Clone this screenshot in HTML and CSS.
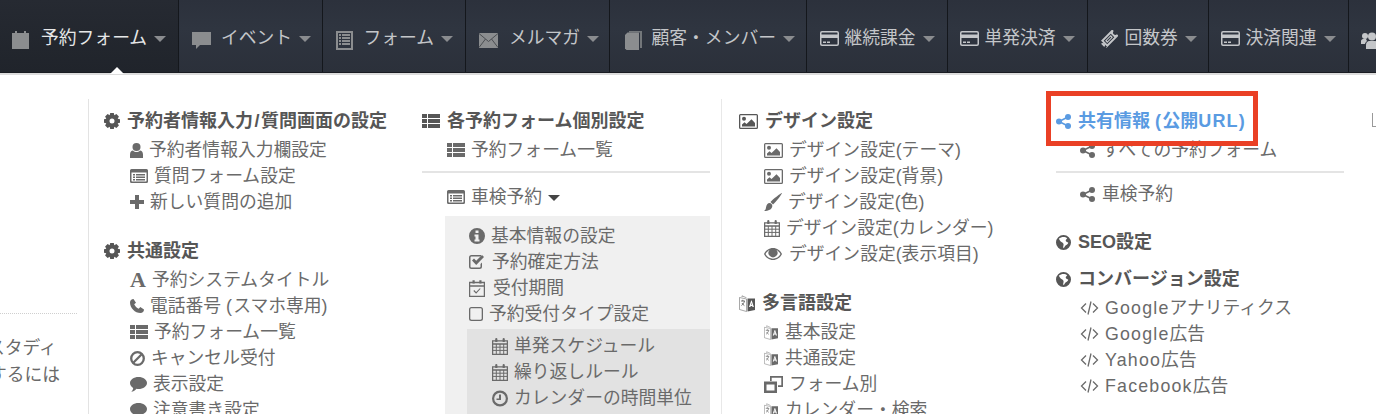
FILE: index.html
```html
<!DOCTYPE html>
<html lang="ja">
<head>
<meta charset="utf-8">
<title>予約フォーム</title>
<link rel="stylesheet" href="styles.css">
</head>
<body>
<svg class="defs" aria-hidden="true">
  <symbol id="nav-cal" viewBox="0 0 17 18"><path d="M3 0h2v2h7V0h2v2h3v16H0V2h3z"/><path class="cut" d="M1.500 6.500h14v10h-14z"/><path d="M2 7h2v2H2zm3 0h2v2H5zm3 0h2v2H8zm3 0h2v2h-2zm3 0h1.500v2H14zM2 10h2v2H2zm3 0h2v2H5zm3 0h2v2H8zm3 0h2v2h-2zm3 0h1.500v2H14zM2 13h2v2H2zm3 0h2v2H5zm3 0h2v2H8zm3 0h2v2h-2zm3 0h1.500v2H14z"/></symbol>
  <symbol id="nav-comment" viewBox="0 0 19 17"><path d="M0 0h19v13H8l-4 4v-4H0z"/></symbol>
  <symbol id="nav-form" viewBox="0 0 17 19"><path fill-rule="evenodd" d="M0 0h17v19H0zM2 2v15h13V2z"/><path d="M3 3h2v2H3zm3 0h8v2H6zM3 6h2v2H3zm3 0h8v2H6zM3 9h2v2H3zm3 0h8v2H6zM3 12h2v2H3zm3 0h8v2H6z"/></symbol>
  <symbol id="nav-mail" viewBox="0 0 19 15"><path d="M0 0h19v15H0z"/><path d="M0 .5l9.500 8 9.500-8M0 14.500l6.500-8.500M19 14.500L12.500 6" fill="none" stroke="#4b4e52" stroke-width="1"/></symbol>
  <symbol id="nav-book" viewBox="0 0 17 19"><path d="M4 0h13v17h-2V1.500H4z" opacity=".75"/><path d="M0 4l2.500-2.500H14V19H1.500L0 17.500z"/></symbol>
  <symbol id="card" viewBox="0 0 19 15"><path fill-rule="evenodd" d="M2 0h15a2 2 0 0 1 2 2v11a2 2 0 0 1-2 2H2a2 2 0 0 1-2-2V2a2 2 0 0 1 2-2zm-.500 7v6c0 .3.200.5.500.5h15c.3 0 .5-.2.500-.5V7zm0-3.500h16V2c0-.3-.2-.5-.5-.5H2c-.3 0-.5.200-.5.500z"/><path d="M3 10.500h3V12H3zm4 0h3V12H7z"/></symbol>
  <symbol id="ticket" viewBox="0 0 18 18"><g transform="rotate(-45 9 9)"><path fill-rule="evenodd" d="M0 4.500h2.200a1.300 1.300 0 0 0 0 .5v8h-2.200zM0 4.500h18v2.200a2.300 2.300 0 0 0 0 4.600v2.200H0v-2.200a2.300 2.300 0 0 0 0-4.600zM4 6.500v5h10v-5z"/><path fill-rule="evenodd" d="M5 7.500h8v3H5zM6.300 8.500v1h5.400v-1z"/></g></symbol>
  <symbol id="users" viewBox="0 0 22 17"><circle cx="11" cy="4.500" r="4"/><circle cx="4" cy="4" r="3"/><circle cx="18" cy="4" r="3"/><path d="M5 17v-4c0-3 2-4 3-4h6c1 0 3 1 3 4v4zM0 12V9c0-1 1-2 2-2h3l1 2c-1 1-2 2-2 3zM22 12V9c0-1-1-2-2-2h-3l-1 2c1 1 2 2 2 3z"/></symbol>
  <symbol id="cog" viewBox="0 0 16 16"><path fill-rule="evenodd" d="M6.200 0h3.600l.5 2.300 2.100-1.200 2.500 2.500-1.200 2.100 2.300.5v3.600l-2.300.5 1.200 2.100-2.500 2.500-2.100-1.200-.5 2.300H6.200l-.5-2.300-2.100 1.200-2.500-2.500 1.200-2.100L0 9.800V6.200l2.300-.5-1.200-2.100 2.500-2.500 2.100 1.200zM8 5.500a2.500 2.500 0 1 0 0 5 2.500 2.500 0 0 0 0-5z"/></symbol>
  <symbol id="th" viewBox="0 0 18 14"><path d="M0 0h5v4H0zm6 0h12v4H6zM0 5h5v4H0zm6 0h12v4H6zM0 10h5v4H0zm6 0h12v4H6z"/></symbol>
  <symbol id="user" viewBox="0 0 13 15"><circle cx="6.500" cy="4" r="4"/><path d="M0 15v-3.500C0 9 1.500 7.500 3 7.500c1 1 2.200 1.500 3.500 1.500S9 8.500 10 7.500c1.500 0 3 1.500 3 4V15z"/></symbol>
  <symbol id="listalt" viewBox="0 0 18 14"><path fill-rule="evenodd" d="M1.500 0h15A1.500 1.500 0 0 1 18 1.500v11a1.500 1.500 0 0 1-1.500 1.500h-15A1.500 1.500 0 0 1 0 12.500v-11A1.500 1.500 0 0 1 1.500 0zm0 3.500v8.500c0 .3.200.5.500.5h14c.3 0 .5-.2.500-.5V3.500z"/><path d="M3 5h2v1.500H3zm3 0h9v1.500H6zM3 7.500h2V9H3zm3 0h9V9H6zM3 10h2v1.500H3zm3 0h9v1.500H6z"/></symbol>
  <symbol id="plus" viewBox="0 0 14 14"><path d="M5 0h4v5h5v4H9v5H5V9H0V5h5z"/></symbol>
  <symbol id="phone" viewBox="0 0 14 14"><path d="M3.500 0L6 3.700 4.200 5.300c.8 1.800 2.600 3.700 4.500 4.500L10.300 8 14 10.500c0 2-1.500 3.500-3.500 3.500C5 14 0 9 0 3.500 0 1.500 1.500 0 3.500 0z"/></symbol>
  <symbol id="ban" viewBox="0 0 15 15"><circle cx="7.500" cy="7.500" r="6.300" fill="none" stroke="currentColor" stroke-width="2.300"/><path d="M3.300 11.700L11.700 3.300" stroke="currentColor" stroke-width="2.300"/></symbol>
  <symbol id="comment" viewBox="0 0 17 15"><path d="M8.500 0C13.200 0 17 2.700 17 6s-3.800 6-8.500 6c-.8 0-1.400 0-2-.2C5 13.500 3 14.800 1.200 15c1-1 1.800-2.200 2-4C1.300 9.900 0 8.100 0 6c0-3.300 3.800-6 8.500-6z"/></symbol>
  <symbol id="info" viewBox="0 0 16 16"><path fill-rule="evenodd" d="M8 0a8 8 0 1 1 0 16A8 8 0 0 1 8 0zM6.500 2.500v2.500h3V2.500zM5.500 6.500v2h1v3h-1v2h5v-2h-1v-5z"/></symbol>
  <symbol id="check" viewBox="0 0 15 14"><path fill-rule="evenodd" d="M2.500 0H12v1.500H2.500c-.6 0-1 .4-1 1v9c0 .6.400 1 1 1h8c.6 0 1-.4 1-1V9L13 7.500v4A2.500 2.500 0 0 1 10.500 14h-8A2.500 2.500 0 0 1 0 11.500v-9A2.500 2.500 0 0 1 2.500 0z"/><path d="M3 5.500l2-2 2.200 2.300L13 0l2 2-7.800 8z"/></symbol>
  <symbol id="calcheck" viewBox="0 0 16 17"><path d="M3.500 .3h2.200v3.200H3.500zM10.300 .3h2.200v3.200h-2.200z"/><path d="M.6 2.500h14.800v13.900H.6zM.6 6h14.800" fill="none" stroke="currentColor" stroke-width="1.300"/><path d="M4.800 10.500l2.300 2.400 4.100-4.400" fill="none" stroke="currentColor" stroke-width="1.100"/></symbol>
  <symbol id="square" viewBox="0 0 14 14"><path fill-rule="evenodd" d="M2.500 0h9A2.500 2.500 0 0 1 14 2.500v9a2.500 2.500 0 0 1-2.500 2.500h-9A2.500 2.500 0 0 1 0 11.500v-9A2.500 2.500 0 0 1 2.500 0zm0 1.300c-.7 0-1.200.5-1.200 1.200v9c0 .7.500 1.200 1.200 1.200h9c.7 0 1.200-.5 1.200-1.200v-9c0-.7-.5-1.200-1.200-1.200z"/></symbol>
  <symbol id="calendar" viewBox="0 0 16 17"><path d="M3.200 2V1.200a1.100 1.100 0 0 1 2.200 0V4H3.200zM10.600 2V1.200a1.100 1.100 0 0 1 2.200 0V4h-2.200z"/><path d="M.6 2.800h14.800v13.600H.6zM.6 6h14.800" fill="none" stroke="currentColor" stroke-width="1.300"/><path d="M.6 9.200h14.800M.6 12.400h14.800M4.300 6v10.400M8 6v10.400M11.700 6v10.400" fill="none" stroke="currentColor" stroke-width="1"/></symbol>
  <symbol id="clock" viewBox="0 0 16 16"><path fill-rule="evenodd" d="M8 0a8 8 0 1 1 0 16A8 8 0 0 1 8 0zm0 2.200a5.800 5.800 0 1 0 0 11.600A5.800 5.800 0 0 0 8 2.200z"/><path d="M7 4h2v5.500H4.500V8H7z"/></symbol>
  <symbol id="picture" viewBox="0 0 19 15"><path fill-rule="evenodd" d="M1.500 0h16A1.500 1.500 0 0 1 19 1.500v12a1.500 1.500 0 0 1-1.500 1.500h-16A1.500 1.500 0 0 1 0 13.500v-12A1.500 1.500 0 0 1 1.500 0zm0 1.300c-.1 0-.2.100-.2.200v12c0 .1.100.2.200.2h16c.1 0 .2-.1.200-.2v-12c0-.1-.1-.2-.2-.2z"/><circle cx="5" cy="4.800" r="2"/><path d="M3 12.500V10.500l2.500-2.300L7.500 10l5-4.700 3.500 3.800v3.400z"/></symbol>
  <symbol id="brush" viewBox="0 0 18 18"><path d="M18 0c0 1-6 9-9 11.500L6.500 9C9 6 17 0 18 0z"/><path d="M5.500 10c1.500 0 3 1.300 2.800 3.300C8 16.500 4.500 18 0 18c1.500-1 1.800-2 2-3.500.3-2.500 1.800-4.500 3.500-4.500z"/></symbol>
  <symbol id="eye" viewBox="0 0 18 12"><path fill-rule="evenodd" d="M9 0c4 0 7.300 2.500 9 6-1.700 3.500-5 6-9 6s-7.300-2.500-9-6c1.700-3.500 5-6 9-6zM1.500 6C3 8.800 5.800 10.700 9 10.700s6-1.900 7.500-4.700C15.300 4 13.500 2.500 12.500 2a4.500 4.500 0 1 1-7 0C4.500 2.500 2.700 4 1.500 6z"/><circle cx="9" cy="5.800" r="3"/></symbol>
  <symbol id="lang" viewBox="0 0 16 17"><path d="M.5 2.500l7 1.500v12.500l-7-2zM3 2V.8l4.500 2" fill="none" stroke="currentColor" stroke-width=".8" opacity=".65"/><path d="M2 6h3.800M3.800 4.800v1.400M2.400 10.500c1.500-1 2.600-2.500 3.100-4.500M3 8c.5 1 1.300 1.900 2.400 2.600" fill="none" stroke="currentColor" stroke-width=".8"/><path fill-rule="evenodd" d="M8.500 3.500h7.500v11.500l-7.500 1.500zM12.200 5.500L10 12h1.400l.3-1.100h1.500l.3 1.100h1.400L12.700 5.500zm.3 2.200l.4 2h-.9z"/></symbol>
  <symbol id="clone" viewBox="0 0 19 17"><path d="M6 0h13v11h-5V9.300h3.300V1.700H7.700V5H6z"/><path fill-rule="evenodd" d="M0 5.500h13V17H0zM2.500 8.500v6h8v-6z"/></symbol>
  <symbol id="share" viewBox="0 0 15 15"><circle cx="3" cy="7.500" r="3"/><circle cx="12" cy="3" r="3"/><circle cx="12" cy="12" r="3"/><path d="M3 7.500l9-4.500M3 7.500l9 4.500" stroke="currentColor" stroke-width="1.600"/></symbol>
  <symbol id="globe" viewBox="0 0 16 16"><path fill-rule="evenodd" d="M8 0a8 8 0 1 1 0 16A8 8 0 0 1 8 0zM3 4c1 1 1 2 2 3s2.500 1 3 2.500S7 12 8 14c1.500-.5 1-2 2.500-3s2.500-1.500 2.500-3c-1 0-2-.5-2.500-1.500S11 4.500 12 3.500C10 2 6 1.500 3 4z"/></symbol>
  <symbol id="code" viewBox="0 0 19 14"><path d="M6 2.500L1.500 7 6 11.500M13 2.500L17.500 7 13 11.500M11 .5L8 13.500" fill="none" stroke="currentColor" stroke-width="1.300"/></symbol>
</svg>

<div class="page">
  <nav class="nav">
    <a class="nav-item is-active"><svg class="n-icon n-cal"><use href="#nav-cal"/></svg><span>予約フォーム</span><i class="nav-caret"></i></a>
    <a class="nav-item w-2"><svg class="n-icon n-comment"><use href="#nav-comment"/></svg><span>イベント</span><i class="nav-caret"></i></a>
    <a class="nav-item w-3"><svg class="n-icon n-form"><use href="#nav-form"/></svg><span>フォーム</span><i class="nav-caret"></i></a>
    <a class="nav-item w-3"><svg class="n-icon n-mail"><use href="#nav-mail"/></svg><span>メルマガ</span><i class="nav-caret"></i></a>
    <a class="nav-item w-5"><svg class="n-icon n-book"><use href="#nav-book"/></svg><span>顧客・メンバー</span><i class="nav-caret"></i></a>
    <a class="nav-item w-6"><svg class="n-icon n-card"><use href="#card"/></svg><span>継続課金</span><i class="nav-caret"></i></a>
    <a class="nav-item w-7"><svg class="n-icon n-card"><use href="#card"/></svg><span>単発決済</span><i class="nav-caret"></i></a>
    <a class="nav-item w-8"><svg class="n-icon n-ticket"><use href="#ticket"/></svg><span>回数券</span><i class="nav-caret"></i></a>
    <a class="nav-item w-7"><svg class="n-icon n-card"><use href="#card"/></svg><span>決済関連</span><i class="nav-caret"></i></a>
    <a class="nav-item w-last"><svg class="n-icon n-users"><use href="#users"/></svg></a>
  </nav>
  <div class="nav-rule"></div>

  <main class="main">
    <aside class="side">
      <div class="side-rule"></div>
      <p class="side-line side-a">スタディ</p>
      <p class="side-line side-b">するには</p>
    </aside>

    <section class="col col-1">
      <h3 class="head"><svg class="i cog"><use href="#cog"/></svg>予約者情報入力<span class="slash">/</span>質問画面の設定</h3>
      <div class="row in-1"><svg class="i user"><use href="#user"/></svg>予約者情報入力欄設定</div>
      <div class="row in-1"><svg class="i listalt"><use href="#listalt"/></svg>質問フォーム設定</div>
      <div class="row in-1"><svg class="i plus"><use href="#plus"/></svg>新しい質問の追加</div>
      <h3 class="head next"><svg class="i cog"><use href="#cog"/></svg>共通設定</h3>
      <div class="row in-1"><span class="font-a">A</span>予約システムタイトル</div>
      <div class="row in-1"><svg class="i phone"><use href="#phone"/></svg>電話番号&nbsp;<span class="lat">(</span>スマホ専用<span class="lat">)</span></div>
      <div class="row in-1"><svg class="i th"><use href="#th"/></svg>予約フォーム一覧</div>
      <div class="row in-1"><svg class="i ban"><use href="#ban"/></svg>キャンセル受付</div>
      <div class="row in-1"><svg class="i comment"><use href="#comment"/></svg>表示設定</div>
      <div class="row in-1"><svg class="i comment"><use href="#comment"/></svg>注意書き設定</div>
    </section>

    <section class="col col-2">
      <h3 class="head"><svg class="i th"><use href="#th"/></svg>各予約フォーム個別設定</h3>
      <div class="row in-2"><svg class="i th"><use href="#th"/></svg>予約フォーム一覧</div>
      <hr class="rule">
      <div class="row in-2 after-rule"><svg class="i listalt"><use href="#listalt"/></svg>車検予約<i class="mini-caret"></i></div>
      <div class="box">
        <div class="row"><svg class="i info"><use href="#info"/></svg>基本情報の設定</div>
        <div class="row"><svg class="i check"><use href="#check"/></svg>予約確定方法</div>
        <div class="row"><svg class="i calcheck"><use href="#calcheck"/></svg>受付期間</div>
        <div class="row"><svg class="i square"><use href="#square"/></svg>予約受付タイプ設定</div>
        <div class="box-inner">
          <div class="row"><svg class="i calendar"><use href="#calendar"/></svg>単発スケジュール</div>
          <div class="row"><svg class="i calendar"><use href="#calendar"/></svg>繰り返しルール</div>
          <div class="row"><svg class="i calendar"><use href="#clock"/></svg>カレンダーの時間単位</div>
        </div>
      </div>
    </section>

    <section class="col col-3">
      <h3 class="head"><svg class="i picture"><use href="#picture"/></svg>デザイン設定</h3>
      <div class="row in-2"><svg class="i picture"><use href="#picture"/></svg>デザイン設定(テーマ)</div>
      <div class="row in-2"><svg class="i picture"><use href="#picture"/></svg>デザイン設定(背景)</div>
      <div class="row in-2"><svg class="i brush"><use href="#brush"/></svg>デザイン設定(色)</div>
      <div class="row in-2"><svg class="i calendar"><use href="#calendar"/></svg>デザイン設定(カレンダー)</div>
      <div class="row in-2"><svg class="i eye"><use href="#eye"/></svg>デザイン設定(表示項目)</div>
      <h3 class="head next"><svg class="i lang"><use href="#lang"/></svg>多言語設定</h3>
      <div class="row in-2"><svg class="i lang-s"><use href="#lang"/></svg>基本設定</div>
      <div class="row in-2"><svg class="i lang-s"><use href="#lang"/></svg>共通設定</div>
      <div class="row in-2"><svg class="i clone"><use href="#clone"/></svg>フォーム別</div>
      <div class="row in-2"><svg class="i lang-s"><use href="#lang"/></svg>カレンダー・検索</div>
    </section>

    <section class="col col-4">
      <h3 class="head link"><svg class="i share"><use href="#share"/></svg>共有情報&nbsp;<span class="lat">(</span>公開<span class="lat">URL)</span></h3>
      <div class="row in-4"><svg class="i share"><use href="#share"/></svg>すべての予約フォーム</div>
      <hr class="rule">
      <div class="row in-4 after-rule-4"><svg class="i share"><use href="#share"/></svg>車検予約</div>
      <h3 class="head seo"><svg class="i share"><use href="#globe"/></svg>SEO設定</h3>
      <h3 class="head conv"><svg class="i share"><use href="#globe"/></svg>コンバージョン設定</h3>
      <div class="row in-4"><svg class="i code"><use href="#code"/></svg><span class="lat">Google</span>アナリティクス</div>
      <div class="row in-4"><svg class="i code"><use href="#code"/></svg><span class="lat">Google</span>広告</div>
      <div class="row in-4"><svg class="i code"><use href="#code"/></svg><span class="lat">Yahoo</span>広告</div>
      <div class="row in-4"><svg class="i code"><use href="#code"/></svg><span class="lat">Facebook</span>広告</div>
    </section>

    <section class="col-5"><span class="corner"></span></section>
  </main>

  <div class="highlight"></div>
</div>
</body>
</html>
```

FILE: styles.css
```css
* { box-sizing: border-box; }

html, body {
  margin: 0;
  height: 414px;
  overflow: hidden;
  background: #fff;
}

body {
  font-family: "Liberation Sans", "Noto Sans CJK JP", sans-serif;
  font-size: 17.8px;
  line-height: 26px;
  color: #6a6a6a;
}

.defs { position: absolute; width: 0; height: 0; }

.page {
  position: relative;
  width: 1376px;
  height: 414px;
  overflow: hidden;
}

/* top navigation */
.nav {
  display: flex;
  height: 73px;
  background: linear-gradient(#2c313c, #2f3540 40%, #2b303a);
  border-bottom: 1px solid #191c22;
}

.nav-item {
  display: flex;
  flex: none;
  align-items: center;
  width: 143.500px;
  padding-left: 13px;
  padding-top: 4px;
  border-right: 1px solid #14171c;
  color: #c4c6c9;
}

.nav-item.is-active {
  width: 179px;
  padding-left: 12px;
  background: linear-gradient(#262a32, #20242b);
  color: #e6e7e8;
}

.w-5 { width: 197px; padding-left: 15px; }
.w-6 { width: 141px; }
.w-7 { width: 140px; padding-left: 12px; }
.w-8 { width: 121px; padding-left: 12px; }
.w-last { width: 40px; padding-left: 12px; border-right: 0; }

.nav-caret {
  flex: none;
  width: 0;
  height: 0;
  margin-left: 7px;
  margin-top: 2px;
  border-left: 6px solid transparent;
  border-right: 6px solid transparent;
  border-top: 6px solid #8a8c8f;
}

.n-icon { flex: none; fill: #8b8d8f; margin-top: 4px; }
.n-cal { width: 17px; height: 18px; margin-right: 12px; }
.n-cal .cut { fill: #2a2e37; }
.n-comment { width: 19px; height: 17px; margin-right: 10px; }
.n-form { width: 17px; height: 19px; margin-right: 11px; }
.n-mail { width: 19px; height: 15px; margin-right: 11px; }
.n-book { width: 17px; height: 19px; margin-right: 10px; }
.n-card { width: 19px; height: 15px; margin-right: 6px; margin-top: 1px; fill: #c4c6c9; }
.n-ticket { width: 18px; height: 18px; margin-right: 7px; margin-top: 1px; fill: #c4c6c9; }
.n-users { width: 22px; height: 17px; fill: #c4c6c9; }

.nav-rule {
  height: 2px;
  background: #dcdcdc;
  position: relative;
}

.nav-rule::after {
  content: "";
  position: absolute;
  left: 110px;
  top: -6px;
  width: 0;
  height: 0;
  border-left: 7px solid transparent;
  border-right: 7px solid transparent;
  border-bottom: 7px solid #fff;
}

/* content */
.main {
  display: flex;
  align-items: flex-start;
  padding-top: 24px;
}

.side {
  flex: none;
  width: 89px;
  height: 315px;
  padding-top: 214px;
  border-right: 1px solid #e3e3e3;
  overflow: hidden;
}

.side-rule {
  width: 77px;
  border-top: 1px dotted #cfcfcf;
  margin-bottom: 21px;
}

.side-line { margin: 0 0 1px; white-space: nowrap; }
.side-a { margin-left: -13px; }
.side-b { margin-left: -11px; }

.col {
  flex: none;
  height: 315px;
  padding-top: 9px;
  overflow: hidden;
}

.col-1 { width: 318px; padding-left: 15px; }
.col-2 { width: 315px; padding-left: 15px; padding-right: 11px; border-right: 1px solid #e8e8e8; }
.col-3 { width: 319px; padding-left: 17px; }
.col-4 { width: 318px; padding-left: 15px; padding-right: 15px; }
.col-5 { flex: none; padding-top: 14px; padding-left: 13px; }

.corner {
  display: block;
  width: 4px;
  height: 14px;
  border-left: 1.500px solid #999;
  border-bottom: 1.500px solid #999;
}

.head {
  display: flex;
  align-items: center;
  margin: 0 0 3px;
  font-size: 18px;
  line-height: 26px;
  font-weight: 700;
  color: #565656;
  white-space: nowrap;
}

.head .i { margin-right: 7px; }
.head.next { margin-top: 23px; }
.head.link { color: #5a9be2; }
.head.seo { margin-top: 22px; margin-bottom: 11px; }
.head.conv { margin-bottom: 3px; }

.slash { margin: 0 1.500px; }
.lat { letter-spacing: 1.200px; }

.row {
  display: flex;
  align-items: center;
  height: 26px;
  white-space: nowrap;
}

.in-1 { padding-left: 26px; }
.in-2 { padding-left: 25px; }
.in-4 { padding-left: 24px; }

.rule {
  height: 2px;
  margin: 8px 0 11px;
  border: 0;
  background: #e4e4e4;
}

.after-rule-4 { margin-top: -3px; }

.mini-caret {
  width: 0;
  height: 0;
  margin-left: 6px;
  margin-top: 2px;
  border-left: 6px solid transparent;
  border-right: 6px solid transparent;
  border-top: 6px solid #444;
}

.box {
  margin-top: 6px;
  margin-left: 23px;
  padding-top: 7px;
  padding-left: 24px;
  background: #f0f0f0;
  height: 300px;
}

.box-inner {
  margin-top: 2px;
  margin-left: -2px;
  padding-top: 4px;
  padding-left: 25px;
  background: #e2e2e2;
  height: 200px;
}

/* icons */
.i {
  flex: none;
  margin-right: 6px;
  fill: currentColor;
}

.cog { width: 16px; height: 16px; }
.th { width: 18px; height: 14px; }
.user { width: 13px; height: 15px; }
.listalt { width: 18px; height: 14px; }
.plus { width: 14px; height: 14px; }
.phone { width: 14px; height: 14px; }
.ban { width: 15px; height: 15px; }
.comment { width: 17px; height: 15px; }
.info { width: 16px; height: 16px; }
.check { width: 15px; height: 14px; margin-right: 8px; }
.calcheck { width: 16px; height: 17px; margin-right: 8px; }
.square { width: 14px; height: 14px; }
.calendar { width: 16px; height: 17px; }
.picture { width: 19px; height: 15px; }
.brush { width: 18px; height: 18px; }
.eye { width: 18px; height: 12px; margin-right: 7px; }
.lang { width: 16px; height: 17px; }
.lang-s { width: 14px; height: 15px; margin-right: 7px; }
.clone { width: 19px; height: 17px; }
.share { width: 15px; height: 15px; margin-right: 7px; }
.code { width: 19px; height: 14px; }

.font-a {
  flex: none;
  width: 16px;
  margin-right: 6px;
  font-family: "Liberation Serif", serif;
  font-size: 22px;
  font-weight: 700;
}

/* annotation drawn over the page */
.highlight {
  position: absolute;
  left: 1046px;
  top: 91px;
  width: 212px;
  height: 55px;
  border: 5px solid #ea4025;
}
```
